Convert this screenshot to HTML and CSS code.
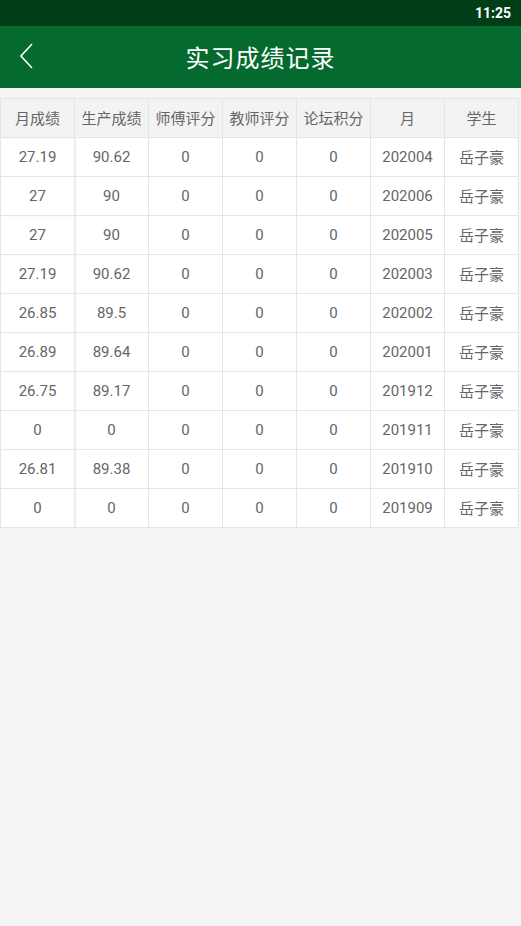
FILE: index.html
```html
<!DOCTYPE html>
<html lang="zh">
  <head>
    <meta charset="UTF-8" />
    <meta name="viewport" content="width=device-width, initial-scale=1.0" />
    <title>实习成绩记录</title>
    <link rel="stylesheet" href="styles.css">
  </head>
  <body>
    <div class="status-bar">11:25</div>
    <div class="top-bar">
      <span class="back">
        <svg width="16" height="28" viewBox="0 0 16 28">
          <polyline points="13,2 2,14 13,26" fill="none" stroke="#ffffff" stroke-width="1.6" />
        </svg>
      </span>
      <h1>实习成绩记录</h1>
    </div>

    <div id="container">
      <table class="score-table">
        <thead>
          <tr>
            <th class="fixed">月成绩</th>
            <th>生产成绩</th>
            <th>师傅评分</th>
            <th>教师评分</th>
            <th>论坛积分</th>
            <th>月</th>
            <th>学生</th>
          </tr>
        </thead>
        <tbody id="rows"></tbody>
      </table>
    </div>

    <script>
      var records = [
        ["27.19", "90.62", "0", "0", "0", "202004", "岳子豪"],
        ["27", "90", "0", "0", "0", "202006", "岳子豪"],
        ["27", "90", "0", "0", "0", "202005", "岳子豪"],
        ["27.19", "90.62", "0", "0", "0", "202003", "岳子豪"],
        ["26.85", "89.5", "0", "0", "0", "202002", "岳子豪"],
        ["26.89", "89.64", "0", "0", "0", "202001", "岳子豪"],
        ["26.75", "89.17", "0", "0", "0", "201912", "岳子豪"],
        ["0", "0", "0", "0", "0", "201911", "岳子豪"],
        ["26.81", "89.38", "0", "0", "0", "201910", "岳子豪"],
        ["0", "0", "0", "0", "0", "201909", "岳子豪"],
      ];

      var html = "";
      records.forEach(function (row) {
        html += "<tr>";
        row.forEach(function (cell, i) {
          var cls = i === 0 ? "fixed" : i === 6 ? "cjk" : "";
          html += "<td" + (cls ? ' class="' + cls + '"' : "") + ">" + cell + "</td>";
        });
        html += "</tr>";
      });
      document.getElementById("rows").innerHTML = html;
    </script>
  </body>
</html>
```

FILE: styles.css
```css
body {
  font-family: Roboto, "Noto Sans CJK SC", sans-serif;
  margin: 0;
  background-color: #f4f4f4;
}
.status-bar {
  height: 26px;
  line-height: 26px;
  background-color: #013e18;
  color: #ffffff;
  font-size: 14px;
  font-weight: bold;
  text-align: right;
  padding-right: 10px;
}
.top-bar {
  height: 62px;
  background-color: #046a2d;
  display: flex;
  align-items: center;
  justify-content: center;
  position: relative;
}
.top-bar h1 {
  margin: 0;
  color: #ffffff;
  font-family: "Noto Sans CJK SC", sans-serif;
  font-size: 24px;
  font-weight: normal;
  letter-spacing: 1px;
  line-height: 30px;
}
.back {
  position: absolute;
  left: 19px;
  top: 16px;
  display: flex;
}
#container {
  padding-top: 10px;
}
.score-table {
  width: 519px;
  border-collapse: collapse;
  table-layout: fixed;
  background-color: #ffffff;
}
.score-table th,
.score-table td {
  border: 1px solid #e6e6e6;
  height: 38px;
  padding: 0;
  text-align: center;
  color: #666666;
  font-size: 15px;
  font-weight: normal;
  line-height: 20px;
}
.score-table th,
.score-table .cjk {
  font-family: "Noto Sans CJK SC", sans-serif;
}
.score-table th {
  background-color: #f3f3f3;
}
.score-table .fixed {
  box-shadow: 1px 0 2px rgba(0, 0, 0, 0.06);
}
```
